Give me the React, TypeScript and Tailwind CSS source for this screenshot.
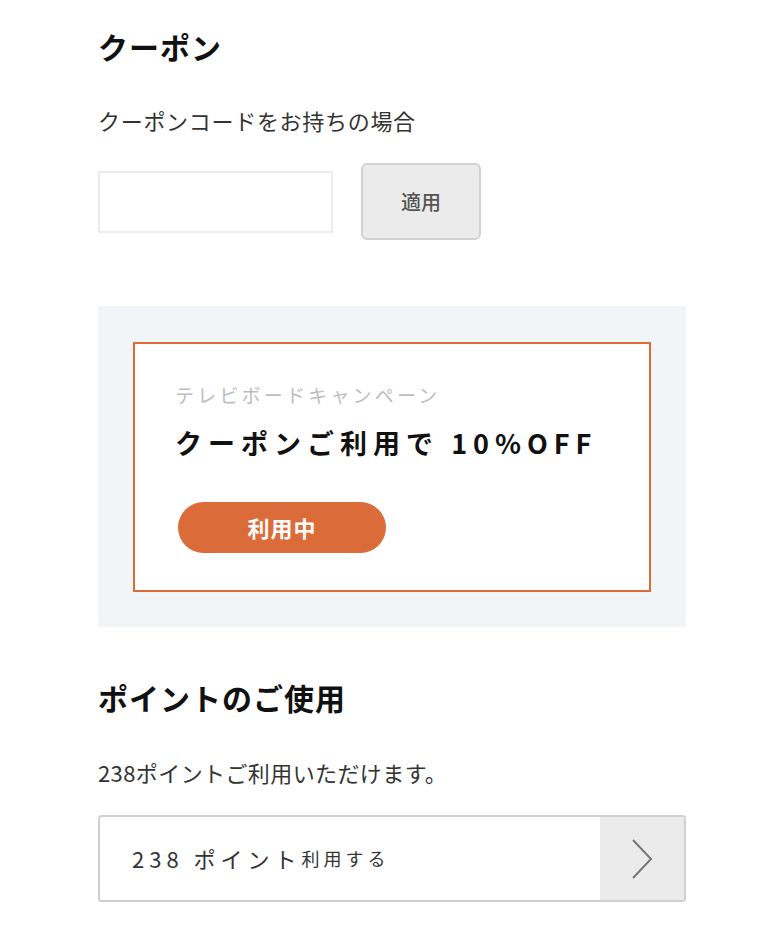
export default function App() {
  return (
    <div
      className="min-h-screen bg-white text-[#222]"
      style={{ fontFamily: '"Noto Sans CJK JP", "Noto Sans", sans-serif' }}
    >
      <div className="ml-[98px] w-[588px] pt-[24px]">
        {/* Coupon */}
        <h2 className="text-[30px] font-bold leading-[44px] tracking-[1px] text-[#111]">クーポン</h2>
        <p className="mt-[36px] text-[22px] leading-[32px] tracking-[0.7px] text-[#333]">
          クーポンコードをお持ちの場合
        </p>
        <div className="mt-[27px] flex items-center gap-[28px]">
          <input
            type="text"
            className="h-[62px] w-[235px] border-2 border-[#ececec] bg-white px-3 text-[18px] outline-none"
          />
          <button className="h-[77px] w-[120px] rounded-[6px] border-2 border-[#d2d2d2] bg-[#ebebeb] text-[20px] font-medium text-[#555]">
            適用
          </button>
        </div>

        {/* Applied campaign */}
        <div className="mt-[66px] bg-[#f2f5f8] px-[35px] pb-[35px] pt-[36px]">
          <div className="border-2 border-[#dd6b3a] bg-white pb-[37px] pl-[40px] pt-[37px]">
            <p className="text-[19px] leading-[28px] tracking-[3.2px] text-[#bdbdbd]">
              テレビボードキャンペーン
            </p>
            <p className="mt-[16px] text-[27px] font-bold leading-[36px] tracking-[6px] text-[#111]">
              クーポンご利用で 10%OFF
            </p>
            <div className="ml-[3px] mt-[41px] flex h-[51px] w-[208px] items-center justify-center rounded-full bg-[#dc6b3a] text-[22px] font-bold tracking-[1px] text-white">
              利用中
            </div>
          </div>
        </div>

        {/* Points */}
        <h2 className="mt-[48px] text-[30px] font-bold leading-[44px] tracking-[1px] text-[#111]">
          ポイントのご使用
        </h2>
        <p className="mt-[37px] text-[22px] leading-[32px] tracking-[0.4px] text-[#333]">
          238ポイントご利用いただけます。
        </p>
        <div className="mt-[27px] flex h-[87px] overflow-hidden rounded-[4px] border-2 border-[#cfcfcf]">
          <div className="flex flex-1 items-center pl-[32px] text-[#333]">
            <span className="text-[22px] tracking-[5px]">238 ポイント</span>
            <span className="text-[18px] tracking-[4px]">利用する</span>
          </div>
          <div className="flex w-[84px] items-center justify-center bg-[#ebebeb]">
            <svg width="24" height="42" viewBox="0 0 24 42" fill="none">
              <path d="M3 2 L21 21 L3 40" stroke="#777" strokeWidth="2" />
            </svg>
          </div>
        </div>
      </div>
    </div>
  );
}
